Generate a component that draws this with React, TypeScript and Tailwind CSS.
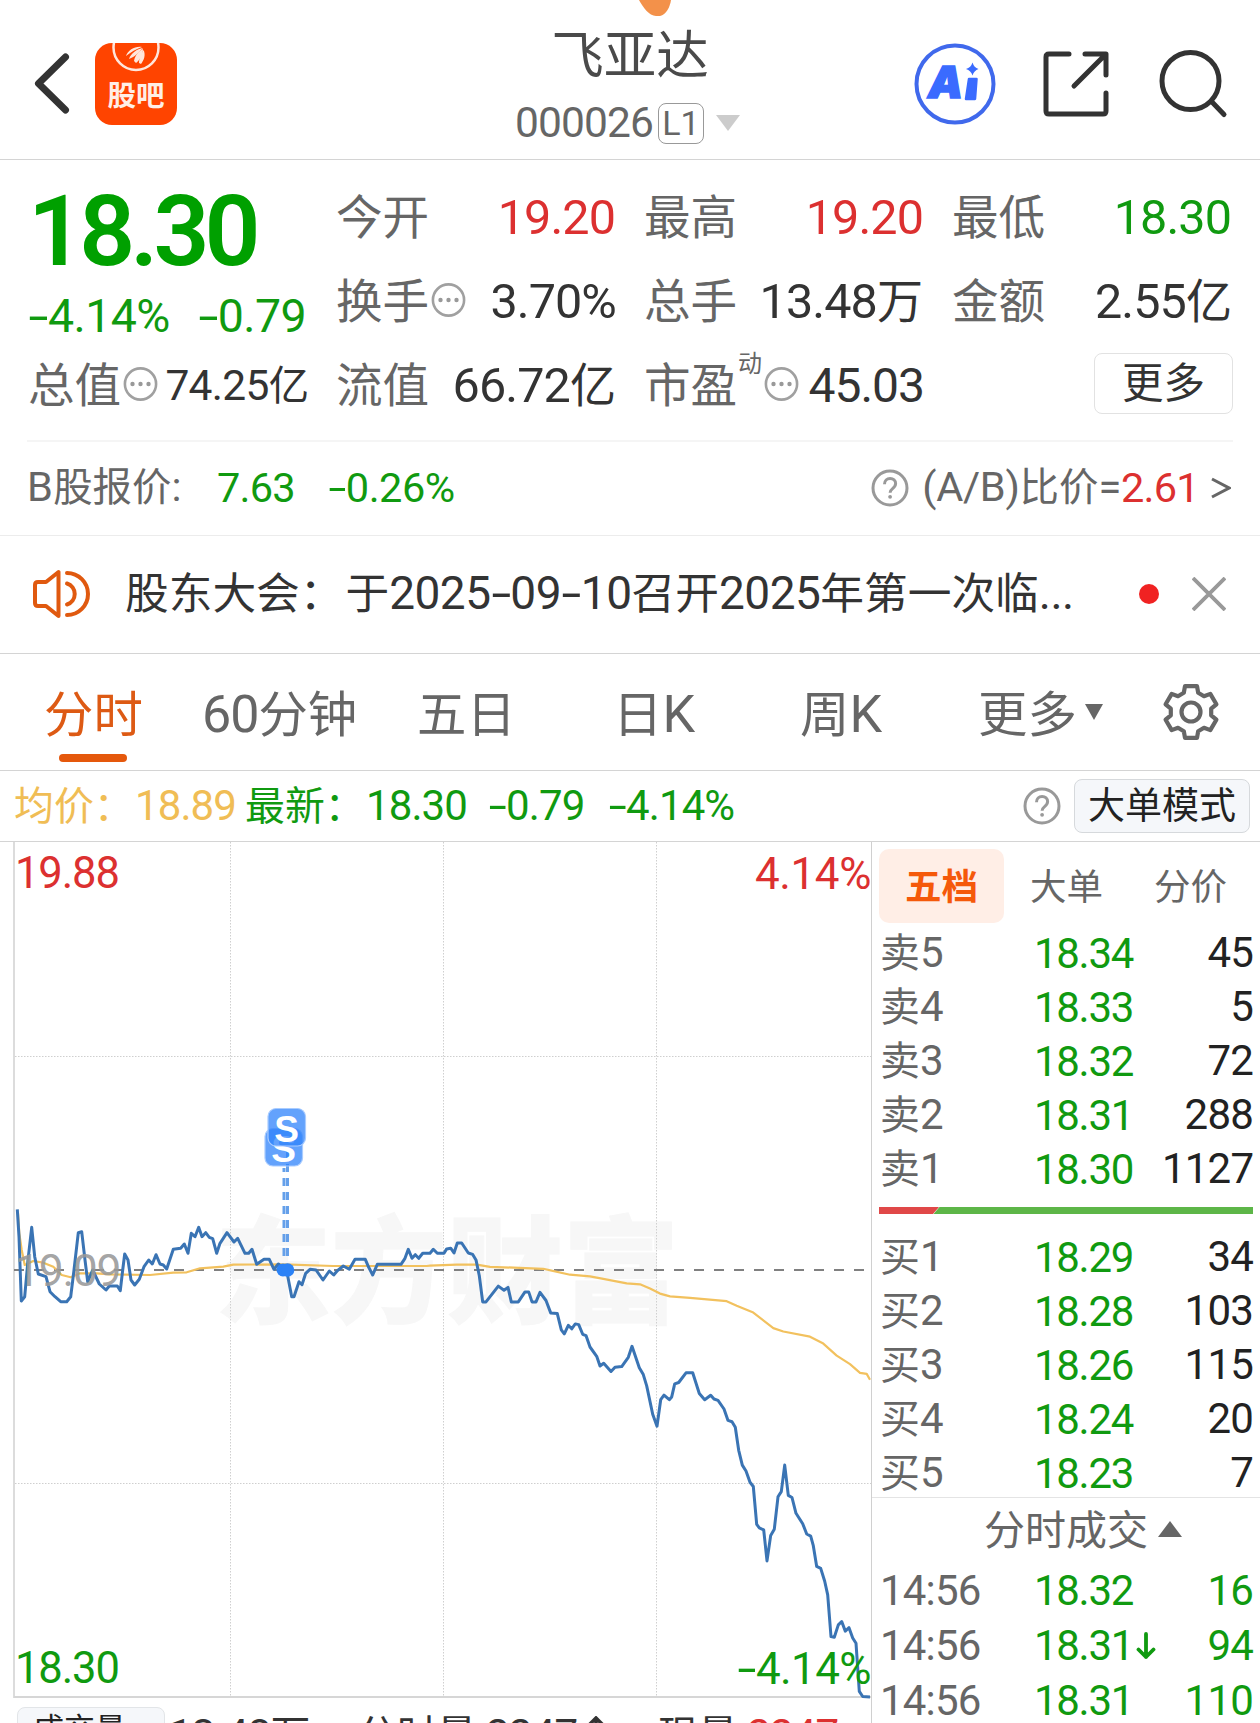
import React from "react";

type Pt = [number, number];

/** Text with CJK runs set slightly smaller than the digits beside them, and wide minus signs. */
function T({ children, className = "" }: { children: string; className?: string }) {
  const parts = children.split(/([\u4e00-\u9fff：]+|-)/).filter(Boolean);
  return (
    <span className={`whitespace-pre ${className}`}>
      {parts.map((p, i) =>
        p === "-" ? (
          <span key={i} className="inline-block w-[0.43em] scale-x-[1.55] text-center">{p}</span>
        ) : /[\u4e00-\u9fff：]/.test(p) ? (
          <span key={i} className="text-[0.95em] tracking-normal">{p}</span>
        ) : (
          <span key={i}>{p}</span>
        )
      )}
    </span>
  );
}

function Dots() {
  return (
    <svg width="35" height="34" viewBox="0 0 35 34" className="mb-[5px] ml-[2px] shrink-0">
      <circle cx="17.500" cy="17" r="15.600" fill="none" stroke="#a0a0a0" strokeWidth="2.600" />
      <circle cx="9.500" cy="17" r="2.200" fill="#999" />
      <circle cx="17.500" cy="17" r="2.200" fill="#999" />
      <circle cx="25.500" cy="17" r="2.200" fill="#999" />
    </svg>
  );
}

function Help() {
  return (
    <svg width="38" height="38" viewBox="0 0 38 38" className="shrink-0" fill="none" stroke="#999" strokeWidth="3">
      <circle cx="19" cy="19" r="17" />
      <path d="M13.5 15.2c0-3.7 2.4-5.7 5.6-5.7s5.5 2.1 5.5 5.1c0 2.5-1.3 3.7-3 5-1.7 1.300-2.500 2.100-2.500 4.200" />
      <circle cx="19.100" cy="27.800" r="1.900" fill="#999" stroke="none" />
    </svg>
  );
}

function Header() {
  return (
    <header className="relative grid h-[160px] shrink-0 grid-cols-[1fr_auto_1fr] border-b border-[#d4d4d4]">
      <svg className="absolute left-[638px] top-0" width="36" height="18" viewBox="0 0 36 18">
        <path d="M1 0C5 7 11 16 18 16h4c6-1 10-9 11-16z" fill="#f3914a" />
      </svg>
      <div className="flex items-start pl-[30px] pt-[42px]">
        <svg width="44" height="82" viewBox="0 0 44 82" fill="none" stroke="#333" strokeWidth="7" strokeLinecap="round">
          <path d="M35.500 15L8.500 41.500L35.500 68" strokeLinejoin="round" />
        </svg>
        <div className="relative ml-[21px] mt-px flex h-[82px] w-[82px] justify-center overflow-hidden rounded-[17px] bg-[#ff4400]">
          <svg className="absolute left-0 top-0" width="82" height="82" viewBox="0 0 82 82">
            <circle cx="41" cy="4.500" r="22.500" fill="none" stroke="#ffe6dc" strokeWidth="2.500" />
            <g fill="#ffe6dc">
              <path d="M31 13C33 7 40 3 47 4C41 6 36 9 31 13z" />
              <path d="M34 16C36 10 42 6 48 5C44 9 40 14 34 16z" />
              <path d="M39 18C40 12 44 8 48 6C48 11 45 17 41 20z" />
              <path d="M44 20C44 14 47 10 48.500 7C51 12 49 17 46 21z" />
            </g>
          </svg>
          <span className="mt-[37px] text-[28.500px] font-bold leading-[34px] text-[#ffeee6]">股吧</span>
        </div>
      </div>
      <div className="flex flex-col items-center pt-[23px]">
        <span className="text-[52.500px] leading-[66px] text-[#4a4a4a]">飞亚达</span>
        <div className="mr-[4px] mt-[14px] flex h-[40px] items-center text-[#666]">
          <span className="w-[138px] text-[42.500px] leading-[40px] tracking-[-0.900px]">000026</span>
          <span className="ml-[5px] flex h-[41px] w-[46px] items-center justify-center rounded-[8px] border-[1.500px] border-[#999] text-[34px] leading-none">L1</span>
          <svg className="ml-[11px]" width="26" height="18" viewBox="0 0 26 18"><path d="M1 1h24L13 17z" fill="#ccc" /></svg>
        </div>
      </div>
      <div className="flex items-start justify-end pr-[32px] pt-[43px]">
        <svg width="82" height="82" viewBox="0 0 82 82">
          <circle cx="41" cy="41" r="38.500" fill="none" stroke="#4069ec" strokeWidth="4" />
          <text x="14" y="55" fontFamily="Inter" fontWeight="900" fontStyle="italic" fontSize="44" fill="#3a6bff" stroke="#3a6bff" strokeWidth="1.500">A</text>
          <path d="M55 36h7.500l-1.500 20h-9z" fill="#3a6bff" stroke="#3a6bff" strokeWidth="2.500" strokeLinejoin="round" />
          <path d="M58.500 19.500q1.500 5 6 6.500q-4.500 1.500-6 6.500q-1.500-5-6.500-6.500q5-1.500 6.500-6.500z" fill="#3a6bff" />
        </svg>
        <svg className="ml-[46px] mt-[6px]" width="70" height="70" viewBox="0 0 70 70" fill="none" stroke="#333" strokeWidth="5" strokeLinecap="round" strokeLinejoin="round">
          <path d="M27 5H7Q4 5 4 8V62Q4 65 7 65H61Q64 65 64 62V44M43 5H64V26M63 6L32 37" />
        </svg>
        <svg className="ml-[44px] mt-[5px]" width="72" height="72" viewBox="0 0 72 72" fill="none" stroke="#333" strokeWidth="5" strokeLinecap="round">
          <circle cx="34.500" cy="33" r="28.500" />
          <path d="M56.500 54.500L68 66.500" />
        </svg>
      </div>
    </header>
  );
}

function Quote() {
  const lab = "text-[49px] text-[#666]";
  const val = "text-[48.500px] tracking-[-0.900px]";
  return (
    <section className="grid h-[281px] shrink-0 grid-cols-[309px_308px_308px_308px] grid-rows-[16px_84px_84px_84px] leading-[84px]">
      <div className="col-span-4" />
      <div className="row-span-2 flex flex-col pl-[28px] text-[#109a10]">
        <span className="mt-px h-[110px] text-[98px] font-semibold leading-[110px] tracking-[-4.800px] text-[#00a000]">18.30</span>
        <div className="flex h-[58px] justify-between pr-[3px] text-[46.500px] leading-[58px] tracking-[-0.600px]">
          <T>-4.14%</T><T>-0.79</T>
        </div>
      </div>
      <div className="flex justify-between pl-[27px] pr-[2px]"><T className={lab}>今开</T><T className={`${val} text-[#dc3030]`}>19.20</T></div>
      <div className="flex justify-between pl-[27px] pr-[2px]"><T className={lab}>最高</T><T className={`${val} text-[#dc3030]`}>19.20</T></div>
      <div className="flex justify-between pl-[27px] pr-[2px]"><T className={lab}>最低</T><T className={`${val} text-[#109a10]`}>18.30</T></div>

      <div className="flex items-center pl-[27px] pr-px"><T className={lab}>换手</T><Dots /><T className={`${val} ml-auto text-[#333]`}>3.70%</T></div>
      <div className="flex justify-between pl-[27px] pr-[2px]"><T className={lab}>总手</T><T className={`${val} text-[#333]`}>13.48万</T></div>
      <div className="flex justify-between pl-[27px] pr-px"><T className={lab}>金额</T><T className={`${val} text-[#333]`}>2.55亿</T></div>

      <div className="flex items-center pl-[28px]"><T className={lab}>总值</T><Dots /><T className="ml-auto text-[42.500px] tracking-[-0.700px] text-[#333]">74.25亿</T></div>
      <div className="flex justify-between pl-[27px] pr-px"><T className={lab}>流值</T><T className={`${val} text-[#333]`}>66.72亿</T></div>
      <div className="flex items-center pl-[27px] pr-px"><T className={lab}>市盈</T><span className="mb-[44px] ml-px w-[24px] text-[24px] leading-none text-[#666]">动</span><Dots /><T className="ml-auto text-[48px] tracking-[-1px] text-[#333]">45.03</T></div>
      <div className="flex items-start justify-end"><span className="flex h-[61px] w-[139px] translate-y-[9px] items-center justify-center rounded-[8px] border-[1.500px] border-[#e2e2e2] text-[41.500px] leading-none text-[#333]">更多</span></div>
    </section>
  );
}

function BShare() {
  return (
    <section className="flex h-[96px] shrink-0 items-center border-b border-[#ececec] text-[41.500px] leading-[90px] text-[#666]">
      <T className="w-[189px] pl-[27px] tracking-[0.300px]">B股报价:</T>
      <span className="w-[112px] pl-[28px] tracking-[-0.800px] text-[#109a10]">7.63</span>
      <T className="pl-[27px] tracking-[-0.500px] text-[#109a10]">-0.26%</T>
      <div className="ml-auto flex items-center pr-[29px]">
        <Help />
        <T className="ml-[13px] tracking-[-0.300px]">(A/B)比价=</T>
        <span className="tracking-[-0.700px] text-[#dc3030]">2.61</span>
        <svg className="ml-[12px]" width="20" height="22" viewBox="0 0 20 22" fill="none" stroke="#666" strokeWidth="3"><path d="M1 2L18 11L1 20" /></svg>
      </div>
    </section>
  );
}

function Notice() {
  return (
    <section className="flex h-[118px] shrink-0 items-center border-b border-[#d4d4d4] pb-[2px] pr-[34px]">
      <svg className="ml-[31px]" width="60" height="54" viewBox="0 0 60 54" fill="none" stroke="#e0590f" strokeWidth="4" strokeLinecap="round" strokeLinejoin="round">
        <path d="M27.500 5V49L15 39H7Q4 39 4 36V18Q4 15 7 15H15z" />
        <path d="M36 16.500A11 11 0 0 1 36 37.500M36 6A21 21 0 0 1 36 48" />
      </svg>
      <T className="ml-[34px] text-[46px] leading-[100px] text-[#333]">股东大会：</T>
      <T className="ml-[2px] text-[46px] leading-[100px] tracking-[-0.500px] text-[#333]">于2025-09-10召开2025年第一次临...</T>
      <span className="ml-auto h-[20px] w-[20px] rounded-full bg-[#f02222]" />
      <svg className="ml-[33px]" width="34" height="34" viewBox="0 0 34 34" stroke="#999" strokeWidth="3.800"><path d="M1 1L33 33M33 1L1 33" /></svg>
    </section>
  );
}

function Gear() {
  const pts: string[] = [];
  for (let i = 0; i < 6; i++) {
    const a = (i * Math.PI) / 3 - Math.PI / 2;
    for (const [r, d] of [[20.500, -0.360], [26.500, -0.230], [26.500, 0.230], [20.500, 0.360]] as Pt[]) {
      pts.push(`${(30 + r * Math.cos(a + d)).toFixed(1)},${(30 + r * Math.sin(a + d)).toFixed(1)}`);
    }
  }
  return (
    <svg width="60" height="60" viewBox="0 0 60 60" fill="none" stroke="#666" strokeWidth="4.200" strokeLinejoin="round">
      <polygon points={pts.join(" ")} />
      <circle cx="30" cy="30" r="9.500" />
    </svg>
  );
}

function Tabs() {
  return (
    <nav className="flex h-[117px] shrink-0 items-center border-b border-[#d4d4d4] text-[52px] leading-[100px] text-[#666]">
      <div className="relative ml-[44px] w-[158px] pt-[5px] text-[#dd5a14]">
        <T>分时</T>
        <span className="absolute bottom-[3px] left-[15px] h-[8px] w-[68px] rounded-full bg-[#e5580c]" />
      </div>
      <T className="w-[215px] pt-[5px] tracking-[-1px]">60分钟</T>
      <T className="w-[196px] pt-[5px]">五日</T>
      <T className="w-[187px] pt-[5px]">日K</T>
      <T className="w-[178px] pt-[5px]">周K</T>
      <T className="pt-[5px]">更多</T>
      <svg className="ml-[8px]" width="18" height="16" viewBox="0 0 18 16"><path d="M0 0h18L9 16z" fill="#666" /></svg>
      <div className="ml-auto mr-[39px]"><Gear /></div>
    </nav>
  );
}

function InfoRow() {
  return (
    <section className="flex h-[71px] shrink-0 items-center border-b border-[#d4d4d4] text-[42px] leading-[68px] tracking-[-0.900px] text-[#109a10]">
      <T className="w-[121px] pl-[14px] text-[#f0bd55]">均价：</T>
      <span className="w-[109px] pl-[14px] text-[#f0bd55]">18.89</span>
      <T className="w-[136px] pl-[15px]">最新：</T>
      <span className="w-[122px]">18.30</span>
      <T className="w-[120px]">-0.79</T>
      <T>-4.14%</T>
      <div className="ml-auto flex items-center pr-[10px]">
        <Help />
        <span className="ml-[13px] flex h-[54px] w-[176px] items-center justify-center rounded-[8px] border-[1.500px] border-[#d6d9dc] bg-[#f5f7fa] text-[37px] leading-none tracking-normal text-[#222]">大单模式</span>
      </div>
    </section>
  );
}

const MORNING: Pt[] = [[52,388],[57,470],[64,663],[74,650],[84,540],[95,442],[104,530],[115,582],[138,590],[150,635],[165,650],[182,665],[200,665],[212,650],[222,570],[235,458],[245,455],[255,540],[263,605],[278,570],[298,612],[318,630],[328,618],[352,618],[361,632],[368,570],[374,522],[384,540],[393,600],[404,615],[418,598],[432,560],[446,540],[457,552],[468,524],[480,552],[490,555],[500,567],[520,508],[542,505],[553,492],[564,520],[574,460],[585,470],[596,442],[606,470],[617,458],[628,472],[638,476],[650,520],[660,490],[681,458],[702,486],[713,475],[735,520],[746,520],[756,508],[770,553],[792,538],[808,538],[822,568],[835,552],[860,572],[875,650],[882,650],[897,605],[906,614],[917,580],[930,568],[948,570],[969,600],[988,573],[1001,585],[1012,572],[1030,558],[1048,568],[1065,538],[1096,538],[1106,562],[1118,585],[1132,553],[1203,553],[1215,535],[1225,508],[1236,535],[1246,524],[1256,535],[1268,520],[1290,520],[1300,508],[1312,520]];
const AFTERNOON: Pt[] = [[35,213],[42,213],[50,200],[62,198],[72,212],[82,183],[95,183],[115,212],[128,216],[138,232],[148,278],[158,354],[168,354],[205,308],[222,320],[234,312],[244,354],[265,354],[285,325],[296,325],[306,354],[318,354],[330,326],[348,350],[362,386],[382,388],[394,435],[403,447],[415,422],[425,432],[436,418],[446,420],[458,448],[468,452],[480,485],[500,512],[510,540],[521,532],[543,556],[555,544],[575,542],[595,515],[606,483],[628,545],[640,565],[650,598],[668,680],[681,715],[692,638],[702,625],[718,638],[725,630],[734,592],[746,588],[768,560],[788,560],[808,620],[824,638],[842,625],[852,636],[864,640],[882,665],[894,698],[906,702],[916,718],[926,785],[937,828],[948,845],[960,878],[970,890],[980,1000],[988,1010],[1001,1016],[1011,1106],[1022,1032],[1033,1014],[1044,920],[1054,905],[1064,828],[1075,916],[1086,922],[1098,968],[1118,998],[1130,1028],[1142,1034],[1150,1062],[1160,1122],[1172,1128],[1184,1165],[1193,1205],[1203,1326],[1213,1328],[1225,1292],[1235,1282],[1246,1310],[1257,1300],[1268,1330],[1278,1345],[1284,1430],[1288,1485],[1298,1500],[1320,1501]];
const AVG_AM: Pt[] = [[54,400],[58,460],[65,510],[74,555],[100,543],[130,548],[160,560],[185,585],[212,592],[240,580],[290,580],[330,583],[450,585],[520,578],[560,577],[600,565],[670,560],[700,554],[850,553],[1000,558],[1280,558]];
const AVG_PM: Pt[] = [[0,249],[80,246],[140,246],[180,252],[340,258],[420,275],[480,280],[520,287],[590,300],[630,303],[660,315],[690,330],[720,338],[780,342],[890,352],[920,365],[970,385],[1030,430],[1060,440],[1140,455],[1180,475],[1220,510],[1260,535],[1290,560],[1310,563],[1320,580]];

const am = ([x, y]: Pt) => `${(x / 3).toFixed(1)},${(1080 + y / 3).toFixed(1)}`;
const pm = ([x, y]: Pt) => `${(430 + x / 3).toFixed(1)},${(1180 + y / 2.904).toFixed(1)}`;
const PRICE = [...MORNING.map(am), ...AFTERNOON.map(pm)].join(" ");
const AVERAGE = [...AVG_AM.map(am), ...AVG_PM.map(pm)].join(" ");

function Marker({ x, y }: { x: number; y: number }) {
  return (
    <g>
      <rect x={x} y={y} width="37.500" height="37.500" rx="8" fill="#2f83fb" fillOpacity="0.750" stroke="#a9ccff" strokeWidth="1.200" />
      <text x={x + 18.700} y={y + 33} textAnchor="middle" fontFamily="Liberation Sans" fontWeight="700" fontSize="37" fill="#fff">S</text>
    </g>
  );
}

function Chart() {
  return (
    <div className="relative h-[857px] w-[871px]">
      <svg className="block" width="871" height="857" viewBox="0 842 871 857" fill="none">
        <text x="215" y="1314" fontFamily="Noto Sans CJK SC" fontWeight="900" fontSize="116" fill="#f7f7f7" stroke="#f7f7f7" strokeWidth="1">东方财富</text>
        <g stroke="#cfcfcf" strokeDasharray="1.500 1.500">
          <path d="M230.500 842V1696M443.500 842V1696M656.500 842V1696" />
          <path d="M15 1056.500H871M15 1483.500H871" />
        </g>
        <path d="M14 842V1698" stroke="#dcdcdc" strokeWidth="2" />
        <path d="M14 1697H871" stroke="#d6d6d6" strokeWidth="2" />
        <path d="M14 1270H864" stroke="#808080" strokeWidth="2" strokeDasharray="10 10" />
        <polyline points={AVERAGE} stroke="#f2c15e" strokeWidth="2.200" strokeLinejoin="round" />
        <polyline points={PRICE} stroke="#3a74b4" strokeWidth="3" strokeLinejoin="round" />
        <g fill="#2b82f6">
          <circle cx="283" cy="1270" r="6.500" />
          <circle cx="287.500" cy="1270" r="6.800" />
        </g>
        <path d="M284 1256V1168M287.500 1256V1150" stroke="#4a8fe6" strokeWidth="3" strokeDasharray="8 6" strokeOpacity="0.850" />
        <Marker x={265} y={1128.500} />
        <Marker x={268} y={1108.500} />
      </svg>
      <span className="absolute left-[15px] top-[7px] text-[43.500px] leading-[50px] tracking-[-1.100px] text-[#dc3030]">19.88</span>
      <span className="absolute right-0 top-[7px] text-[44px] leading-[50px] tracking-[-0.400px] text-[#dc3030]">4.14%</span>
      <span className="absolute left-[15px] top-[404px] text-[44.500px] leading-[50px] tracking-[-1.300px] text-[#999]/90">19.09</span>
      <span className="absolute bottom-[5px] left-[15px] text-[43.500px] leading-[50px] tracking-[-1.100px] text-[#109a10]">18.30</span>
      <T className="absolute bottom-[5px] right-0 text-[44px] leading-[50px] tracking-[-0.600px] text-[#109a10]">-4.14%</T>
    </div>
  );
}

function Volume() {
  return (
    <div className="relative flex h-[50px] pl-[17px] pt-[8px] text-[42px] leading-[55px] tracking-[-0.800px] text-[#333]">
      <div className="flex h-[42px] w-[148px] rounded-[8px] border border-[#e2e5e8] bg-[#f5f7fa] pl-[15px]">
        <span className="text-[31px] leading-[43px] tracking-normal text-[#222]">成交量</span>
      </div>
      <T className="w-[192px] pl-[4px]">13.48万</T>
      <T className="w-[224px]">分时量:2247</T>
      <svg className="absolute left-[585px] top-[17px]" width="22" height="34" viewBox="0 0 22 34" fill="none" stroke="#333" strokeWidth="3.500"><path d="M11 2V32M2 11L11 2L20 11" /></svg>
      <T className="ml-[77px]">现量:</T>
      <span className="text-[#dc3030]">2247</span>
    </div>
  );
}

function Level({ label, price, vol, down, trade }: { label: string; price: string; vol: string; down?: boolean; trade?: boolean }) {
  return (
    <div className={`grid shrink-0 grid-cols-[154px_128px_1fr] pl-[8px] pr-[7px] text-[42px] tracking-[-0.800px] ${trade ? "h-[55px] leading-[55px]" : "h-[54px] leading-[54px]"}`}>
      <T className="text-[#666]">{label}</T>
      <div className="flex items-center tracking-[-1.300px] text-[#109a10]">
        {price}
        {down && (
          <svg className="ml-[3px] shrink-0" width="20" height="28" viewBox="0 0 20 28" fill="none" stroke="#109a10" strokeWidth="3.800" strokeLinecap="round" strokeLinejoin="round"><path d="M10 2V25M2.500 17.500L10 25L17.500 17.500" /></svg>
        )}
      </div>
      <span className={`text-right ${trade ? "text-[#109a10]" : "text-[#222]"}`}>{vol}</span>
    </div>
  );
}

const SELL = [["卖5", "18.34", "45"], ["卖4", "18.33", "5"], ["卖3", "18.32", "72"], ["卖2", "18.31", "288"], ["卖1", "18.30", "1127"]];
const BUY = [["买1", "18.29", "34"], ["买2", "18.28", "103"], ["买3", "18.26", "115"], ["买4", "18.24", "20"], ["买5", "18.23", "7"]];

function OrderBook() {
  return (
    <aside className="flex w-[389px] shrink-0 flex-col overflow-hidden border-l border-[#d0d0d0]">
      <div className="flex h-[84px] shrink-0 items-start pl-[7px] pt-[7px] text-[36.500px] leading-[78px] text-[#666]">
        <span className="h-[74px] w-[125px] rounded-[10px] bg-[#ffeee6] text-center font-bold text-[#f5590a]">五档</span>
        <span className="ml-[26px]">大单</span>
        <span className="ml-[51px]">分价</span>
      </div>
      {SELL.map(([l, p, v]) => <Level key={l} label={l} price={p} vol={v} />)}
      <svg className="mb-[16px] mt-[11px] ml-[7px] shrink-0" width="374" height="7" viewBox="0 0 374 7">
        <path d="M0 0H60L54 7H0z" fill="#e04848" />
        <path d="M60.500 0H374V7H54.500z" fill="#5db648" />
      </svg>
      {BUY.map(([l, p, v]) => <Level key={l} label={l} price={p} vol={v} />)}
      <div className="mt-[-3px] flex h-[66px] shrink-0 items-center border-t border-[#e4e4e4] pl-[112px] text-[41px] leading-[62px] text-[#666]">
        分时成交
        <svg className="mb-[3px] ml-[10px]" width="24" height="16" viewBox="0 0 24 16"><path d="M12 0L24 16H0z" fill="#666" /></svg>
      </div>
      <Level trade label="14:56" price="18.32" vol="16" />
      <Level trade label="14:56" price="18.31" vol="94" down />
      <Level trade label="14:56" price="18.31" vol="110" />
    </aside>
  );
}

export default function App() {
  return (
    <main className="flex h-[1723px] w-[1260px] flex-col overflow-hidden bg-white font-['Roboto','Noto_Sans_CJK_SC',sans-serif]">
      <Header />
      <Quote />
      <div className="mx-[27px] mt-[-1px] h-[2px] shrink-0 bg-[#f5f5f5]" />
      <div className="mt-[-2px] shrink-0"><BShare /></div>
      <Notice />
      <Tabs />
      <InfoRow />
      <div className="flex min-h-0 flex-1">
        <div className="w-[871px] shrink-0">
          <Chart />
          <Volume />
        </div>
        <OrderBook />
      </div>
    </main>
  );
}
